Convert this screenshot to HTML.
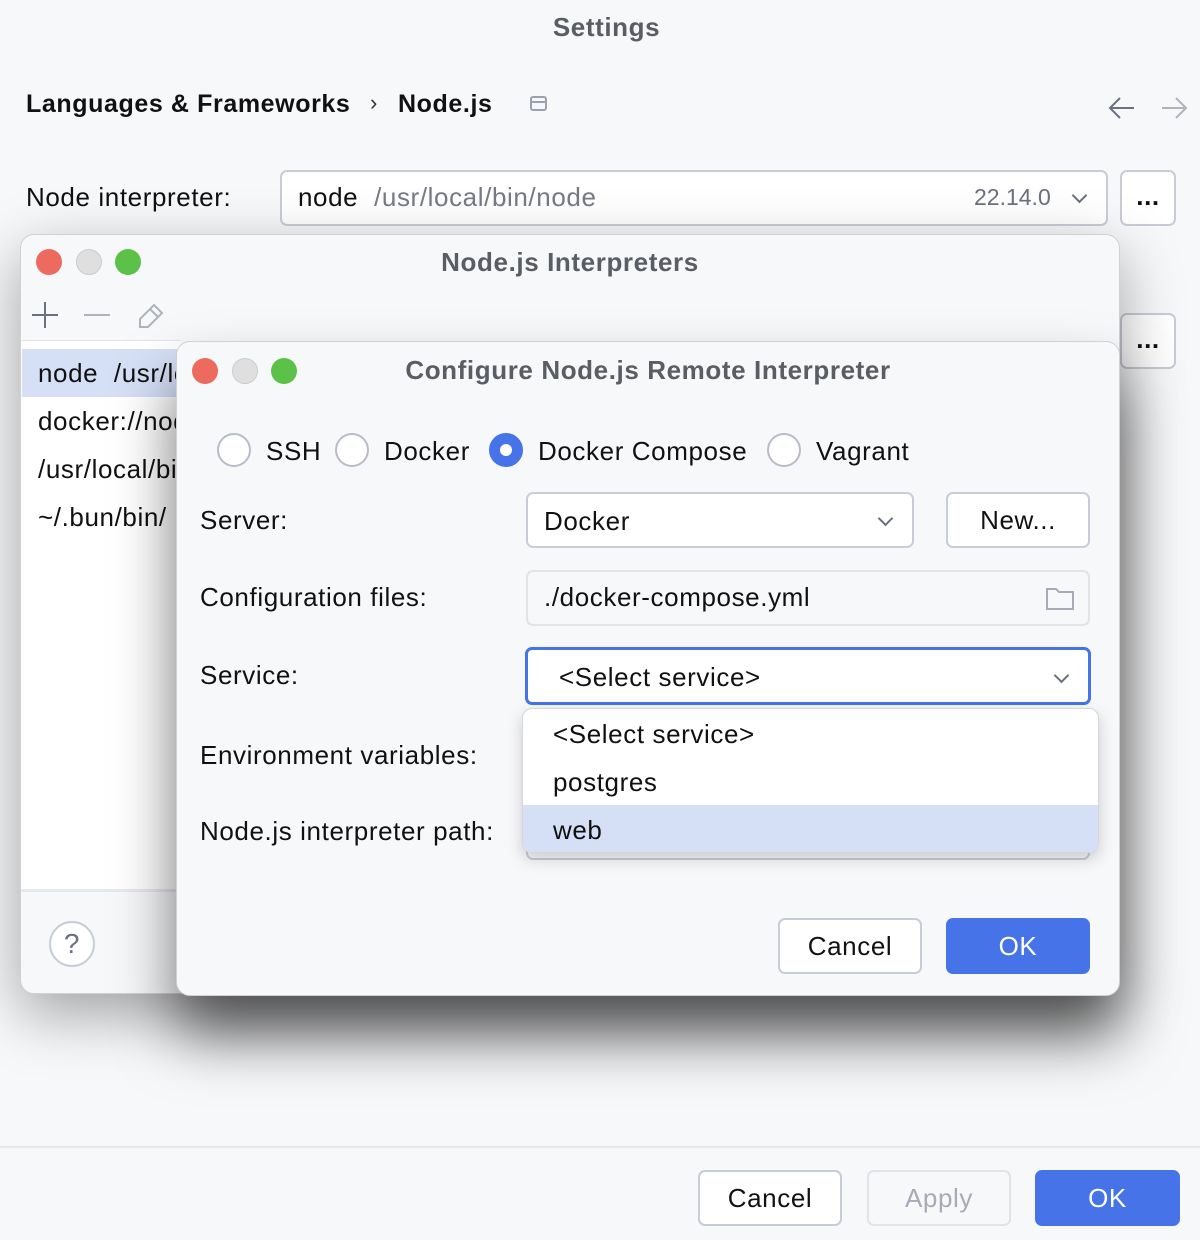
<!DOCTYPE html>
<html><head><meta charset="utf-8"><style>
*{box-sizing:border-box;margin:0;padding:0}
body{width:1200px;height:1240px;background:#f7f8fa;font-family:"Liberation Sans",sans-serif;color:#111;position:relative;overflow:hidden;font-size:26px;letter-spacing:0.6px}
.a{position:absolute;white-space:nowrap}
.btn{position:absolute;border:2px solid #c9ccd6;border-radius:7px;background:#fff;text-align:center;font-size:26px}
.pri{background:#4674e8;border-color:#4674e8;color:#fff}
.field{position:absolute;border:2px solid #c9ccd6;border-radius:7px;background:#fff}
.dot{position:absolute;width:26px;height:26px;border-radius:50%}
.radio{position:absolute;width:34px;height:34px;border-radius:50%;border:2px solid #b9bcc8;background:#fff}
.chev{position:absolute;width:11px;height:11px;border-right:2px solid #6c707e;border-bottom:2px solid #6c707e;transform:rotate(45deg)}
</style></head><body>
<div class="a" style="left:0;width:1213px;top:12px;text-align:center;font-weight:bold;color:#5a5d63;font-size:26px">Settings</div>
<div class="a" style="left:26px;top:90px;font-weight:bold;font-size:25px">Languages &amp; Frameworks</div>
<div class="a" style="left:370px;top:90px;font-size:22px;color:#333">›</div>
<div class="a" style="left:398px;top:90px;font-weight:bold;font-size:25px">Node.js</div>
<div class="a" style="left:530px;top:96px;width:17px;height:15px;border:2px solid #9ea1ad;border-radius:3px"><div style="border-top:2px solid #9ea1ad;margin-top:3px"></div></div>
<svg class="a" style="left:1108px;top:96px" width="80" height="24"><path d="M26 12H2M12 2L2 12L12 22" stroke="#6c707e" stroke-width="2" fill="none"/><path d="M54 12H78M68 2L78 12L68 22" stroke="#b0b3bc" stroke-width="2" fill="none"/></svg>
<div class="a" style="left:26px;top:182px">Node interpreter:</div>
<div class="field" style="left:280px;top:170px;width:828px;height:56px"></div>
<div class="a" style="left:298px;top:182px">node <span style="color:#777a84;margin-left:8px">/usr/local/bin/node</span></div>
<div class="a" style="left:974px;top:184px;color:#6c707e;font-size:23px;letter-spacing:0">22.14.0</div>
<div class="chev" style="left:1074px;top:190px"></div>
<div class="btn" style="left:1120px;top:170px;width:56px;height:56px;line-height:48px;font-weight:bold">...</div>
<div class="btn" style="left:1120px;top:313px;width:56px;height:56px;line-height:48px;font-weight:bold">...</div>

<div class="a" style="left:20px;top:234px;width:1100px;height:760px;background:#f7f8fa;border:1px solid #cfd1d6;border-radius:14px;box-shadow:0 20px 60px rgba(0,0,0,.35)">
</div>
<div class="dot" style="left:36px;top:249px;background:#ec6a5e"></div>
<div class="dot" style="left:76px;top:249px;background:#dfdfdf;border:1px solid #ccc"></div>
<div class="dot" style="left:115px;top:249px;background:#5cc149"></div>
<div class="a" style="left:20px;width:1100px;top:247px;text-align:center;font-weight:bold;color:#5a5d63;font-size:26px">Node.js Interpreters</div>
<svg class="a" style="left:30px;top:300px" width="140" height="30"><path d="M15 2V28M2 15H28" stroke="#6c707e" stroke-width="2"/><path d="M54 15H80" stroke="#b0b3bc" stroke-width="2"/><path d="M124 5l8 8-14 14h-8v-8z M120 9l8 8" stroke="#b0b3bc" stroke-width="2" fill="none"/></svg>
<div class="a" style="left:21px;top:340px;width:160px;height:550px;background:#fff;border-top:1px solid #e4e5e9"></div>
<div class="a" style="left:22px;top:349px;width:160px;height:48px;background:#d5e0f7"></div>
<div class="a" style="left:38px;top:358px">node&nbsp; /usr/lo</div>
<div class="a" style="left:38px;top:406px">docker://nod</div>
<div class="a" style="left:38px;top:454px">/usr/local/bi</div>
<div class="a" style="left:38px;top:502px">~/.bun/bin/</div>
<div class="a" style="left:21px;top:889px;width:160px;border-top:3px solid #e8e9ed"></div>
<div class="a" style="left:49px;top:921px;width:46px;height:46px;border-radius:50%;border:2px solid #c9ccd6;background:#fff;text-align:center;line-height:42px;color:#6c707e;font-size:28px">?</div>

<div class="a" style="left:176px;top:341px;width:944px;height:655px;background:#f7f8fa;border:1px solid #cfd1d6;border-radius:14px;box-shadow:0 40px 60px rgba(0,0,0,.55)"></div>
<div class="dot" style="left:192px;top:358px;background:#ec6a5e"></div>
<div class="dot" style="left:232px;top:358px;background:#dfdfdf;border:1px solid #ccc"></div>
<div class="dot" style="left:271px;top:358px;background:#5cc149"></div>
<div class="a" style="left:176px;width:944px;top:355px;text-align:center;font-weight:bold;color:#5a5d63;font-size:26px">Configure Node.js Remote Interpreter</div>
<div class="radio" style="left:217px;top:433px"></div><div class="a" style="left:266px;top:436px">SSH</div>
<div class="radio" style="left:335px;top:433px"></div><div class="a" style="left:384px;top:436px">Docker</div>
<div class="radio" style="left:489px;top:433px;background:#4674e8;border-color:#4674e8"><div style="width:12px;height:12px;background:#fff;border-radius:50%;margin:9px"></div></div><div class="a" style="left:538px;top:436px">Docker Compose</div>
<div class="radio" style="left:767px;top:433px"></div><div class="a" style="left:816px;top:436px">Vagrant</div>

<div class="a" style="left:200px;top:505px">Server:</div>
<div class="field" style="left:526px;top:492px;width:388px;height:56px"></div>
<div class="a" style="left:544px;top:506px">Docker</div>
<div class="chev" style="left:880px;top:513px"></div>
<div class="btn" style="left:946px;top:492px;width:144px;height:56px;line-height:52px">New...</div>

<div class="a" style="left:200px;top:582px">Configuration files:</div>
<div class="field" style="left:526px;top:570px;width:564px;height:56px;background:#f7f8fa;border-color:#e1e3e8"></div>
<div class="a" style="left:544px;top:582px">./docker-compose.yml</div>
<svg class="a" style="left:1045px;top:585px" width="30" height="26"><path d="M2 4h9l3 3h14v17H2z" stroke="#a8abb5" stroke-width="2" fill="none"/></svg>

<div class="a" style="left:200px;top:660px">Service:</div>
<div class="field" style="left:525px;top:647px;width:566px;height:58px;border:3px solid #4674e8"></div>
<div class="a" style="left:559px;top:662px">&lt;Select service&gt;</div>
<div class="chev" style="left:1056px;top:670px"></div>

<div class="a" style="left:200px;top:740px">Environment variables:</div>
<div class="a" style="left:200px;top:816px">Node.js interpreter path:</div>
<div class="field" style="left:526px;top:820px;width:564px;height:40px;background:#f7f8fa"></div>

<div class="a" style="left:522px;top:708px;width:577px;height:145px;background:#fff;border:1px solid #d5d7dd;border-radius:10px;box-shadow:0 6px 16px rgba(0,0,0,.18);overflow:hidden">
<div style="position:absolute;left:30px;top:10px">&lt;Select service&gt;</div>
<div style="position:absolute;left:30px;top:58px">postgres</div>
<div style="position:absolute;left:0;top:96px;width:100%;height:49px;background:#d5e0f7"></div>
<div style="position:absolute;left:30px;top:106px">web</div>
</div>

<div class="btn" style="left:778px;top:918px;width:144px;height:56px;line-height:52px">Cancel</div>
<div class="btn pri" style="left:946px;top:918px;width:144px;height:56px;line-height:52px">OK</div>

<div class="a" style="left:0;top:1146px;width:1200px;border-top:2px solid #e6e7eb"></div>
<div class="btn" style="left:698px;top:1170px;width:144px;height:56px;line-height:52px">Cancel</div>
<div class="btn" style="left:867px;top:1170px;width:144px;height:56px;line-height:52px;color:#a8abb5;background:#f7f8fa;border-color:#e1e3e8">Apply</div>
<div class="btn pri" style="left:1035px;top:1170px;width:145px;height:56px;line-height:52px">OK</div>
</body></html>
